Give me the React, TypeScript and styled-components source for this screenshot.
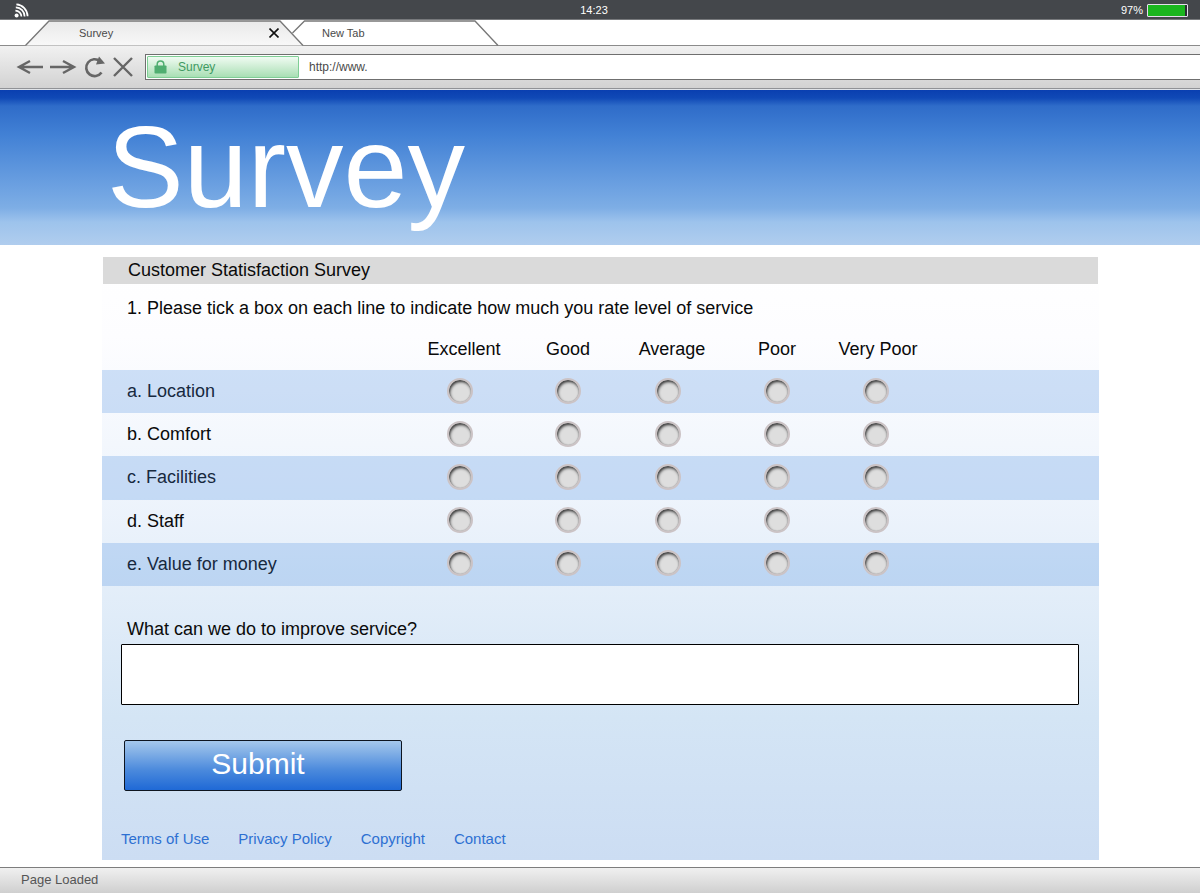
import React from 'react';
import styled, { createGlobalStyle } from 'styled-components';

const GlobalStyle = createGlobalStyle`
  *, *::before, *::after { box-sizing: border-box; }
  body {
    margin: 0;
    background: #fff;
    color: #0a0a0a;
    font-family: "Liberation Sans", Arial, sans-serif;
  }
  button, input, textarea { font-family: inherit; }
`;

const Page = styled.div`
  display: flex;
  flex-direction: column;
  min-height: 100vh;
`;

/* Device status bar */
const DeviceBar = styled.div`
  display: grid;
  grid-template-columns: 1fr auto 1fr;
  align-items: center;
  height: 20px;
  padding: 0 12px 0 0;
  background: #44474b;
  border-bottom: 1px solid #77797c;
  color: #fff;
  font-size: 11px;
  line-height: 20px;
`;

const Signal = styled.span`
  display: flex;
  padding-left: 14px;
`;

const Charge = styled.div`
  display: flex;
  justify-content: flex-end;
  align-items: center;
  gap: 4px;
`;

const Battery = styled.span`
  width: 41px;
  height: 13px;
  padding-right: 1px;
  border: 1px solid #e6dcec;
  border-radius: 1px;
  background: #2b2d33;
`;

const BatteryLevel = styled.span`
  display: block;
  height: 100%;
  background: #1bb51f;
`;

/* Browser chrome */
const TabStrip = styled.div`
  display: flex;
  height: 26px;
  padding-left: 24px;
  border-bottom: 1px solid #8b8b8b;
`;

const Tab = styled.div<{ $width: number; $inset: number; $overlap?: boolean }>`
  position: relative;
  display: flex;
  align-items: center;
  justify-content: space-between;
  flex: none;
  width: ${(p) => p.$width}px;
  margin-left: ${(p) => (p.$overlap ? -12 : 0)}px;
  padding: 0 25px 0 ${(p) => p.$inset}px;
`;

const TabShape = styled.svg`
  position: absolute;
  top: 0;
  left: 0;
`;

const TabLabel = styled.button`
  position: relative;
  padding: 0;
  border: 0;
  background: none;
  color: #4a4a4a;
  font-size: 11px;
  line-height: 24px;
`;

const TabClose = styled.button`
  position: relative;
  display: flex;
  padding: 0;
  border: 0;
  background: none;
`;

const Toolbar = styled.div`
  display: flex;
  align-items: center;
  height: 43px;
  padding: 0 0 1px 16px;
  background: linear-gradient(#f1f1f1, #d2d2d2);
  border-bottom: 1px solid #909296;
`;

const NavButtons = styled.div`
  display: flex;
  align-items: center;
  gap: 7px;
  margin-right: 12px;
`;

const NavButton = styled.button`
  display: flex;
  padding: 0;
  border: 0;
  background: none;
`;

const AddressBar = styled.div`
  display: flex;
  align-items: center;
  flex: 1;
  height: 26px;
  padding-left: 1px;
  border: 1px solid #6f6f6f;
  border-right: 0;
  background: #fff;
`;

const SiteBadge = styled.span`
  display: flex;
  align-items: center;
  gap: 11px;
  width: 152px;
  height: 22px;
  padding-left: 6px;
  border: 1px solid #7fce95;
  border-radius: 1px;
  background: linear-gradient(#f0fbf2, #a9dfb4);
  color: #3f9a62;
  font-size: 12px;
`;

const Address = styled.input`
  flex: 1;
  min-width: 0;
  padding: 0 0 0 10px;
  border: 0;
  background: none;
  color: #4a4a4a;
  font-size: 12px;
  outline: 0;
`;

/* Page content */
const Banner = styled.header`
  height: 156px;
  padding: 11px 111px;
  border-top: 1px solid #dfe3e8;
  background: linear-gradient(
    #0a3fb0 0,
    #1049b6 8px,
    #2f6cc9 16px,
    #4281d5 45px,
    #6fa3e2 100px,
    #7eaee5 118px,
    #9dc3ec 132px,
    #b0cdee 155px
  );
`;

const Title = styled.h1`
  margin: 0 0 0 -4px;
  color: #fff;
  font-size: 115px;
  font-weight: 400;
  line-height: 132px;
`;

const Panel = styled.form`
  flex: 1;
  margin: 12px 101px 7px 102px;
  background: linear-gradient(#fff 0, #fdfdff 80px, #eef4fc 240px, #d4e5f5 460px, #ccddf3 100%);
`;

const PanelTitle = styled.h2`
  margin: 0 1px;
  padding-left: 25px;
  background: #dadada;
  font-size: 18px;
  font-weight: 400;
  line-height: 27px;
`;

const Question = styled.p`
  margin: 0;
  padding: 12px 25px 9px;
  font-size: 18px;
  line-height: 24px;
`;

const Ratings = styled.table`
  width: 100%;
  height: 257px;
  table-layout: fixed;
  border-collapse: collapse;
  font-size: 18px;
`;

const LabelColumn = styled.col`
  width: 310px;
`;

const RatingColumn = styled.col<{ $width: number }>`
  width: ${(p) => p.$width}px;
`;

const HeadRow = styled.tr`
  height: 41px;
`;

const HeadCell = styled.th`
  padding: 0;
  font-weight: 400;
  white-space: nowrap;
`;

const RatingRow = styled.tr<{ $shaded: boolean }>`
  color: ${(p) => (p.$shaded ? '#17293f' : '#0a0a0a')};
  background: ${(p) => (p.$shaded ? 'rgba(70, 140, 225, 0.25)' : 'transparent')};
`;

const RowLabel = styled.th`
  padding: 0 0 0 25px;
  font-weight: 400;
  text-align: left;
`;

const RatingCell = styled.td<{ $trim: number }>`
  padding: 0 ${(p) => p.$trim}px 2px 0;
  text-align: center;
`;

const Radio = styled.input`
  appearance: none;
  display: inline-block;
  width: 26px;
  height: 26px;
  margin: 0;
  border: 2px solid #cbc3c5;
  border-radius: 50%;
  background: #dedede;
  box-shadow: inset 0 0 1px #777, inset 1px 2px 3px #333;
  vertical-align: middle;

  &:checked {
    background: radial-gradient(#2f6cc9 0 5px, #dedede 6px);
  }
`;

const Comments = styled.div`
  display: flex;
  flex-direction: column;
  padding: 31px 20px 0 19px;
`;

const CommentsLabel = styled.label`
  padding: 0 6px 3px;
  font-size: 18px;
  line-height: 24px;
`;

const CommentsBox = styled.textarea`
  height: 61px;
  padding: 6px;
  border: 1px solid #000;
  border-radius: 1px;
  background: #fff;
  font-size: 18px;
  resize: none;
`;

const Submit = styled.button`
  display: block;
  width: 278px;
  height: 51px;
  margin: 35px 0 0 22px;
  padding: 0 10px 3px 0;
  border: 1px solid #0d1520;
  border-radius: 2px;
  background: linear-gradient(#a5c8ec, #4a89dc 60%, #1f69d6);
  color: #fff;
  font-size: 30px;
`;

const Links = styled.nav`
  display: flex;
  flex-wrap: wrap;
  gap: 29px;
  padding: 37px 19px 11px;
  line-height: 21px;
`;

const FooterLink = styled.a`
  color: #2d70d2;
  font-size: 15px;
  text-decoration: none;
`;

const StatusBar = styled.footer`
  height: 26px;
  padding-left: 21px;
  border-top: 1px solid #7d7d7d;
  background: linear-gradient(#f0f0f0, #cfcfcf);
  color: #555;
  font-size: 13px;
  line-height: 24px;
`;

const columns = [
  { name: 'Excellent', width: 104, trim: 8 },
  { name: 'Good', width: 104, trim: 0 },
  { name: 'Average', width: 104, trim: 8 },
  { name: 'Poor', width: 106, trim: 0 },
  { name: 'Very Poor', width: 96, trim: 4 },
];

const rows = ['a. Location', 'b. Comfort', 'c. Facilities', 'd. Staff', 'e. Value for money'];

const links = ['Terms of Use', 'Privacy Policy', 'Copyright', 'Contact'];

const SignalIcon = () => (
  <svg width="15" height="15" viewBox="0 0 15 15" fill="none" stroke="#fff" strokeWidth="1.7">
    <circle cx="2.6" cy="12.4" r="2" fill="#fff" stroke="none" />
    <path d="M1.4 7.6a6 6 0 0 1 6 6M1.8 4.4a9 9 0 0 1 8.8 9.2M2.4 1.4a12 12 0 0 1 11.2 11.8" />
  </svg>
);

const BackIcon = () => (
  <svg width="27" height="18" viewBox="0 0 27 18" fill="none" stroke="#666" strokeWidth="2.4">
    <path d="M3 9h24M14 3L3 9l11 6" />
  </svg>
);

const ForwardIcon = () => (
  <svg width="27" height="18" viewBox="0 0 27 18" fill="none" stroke="#666" strokeWidth="2.4">
    <path d="M0 9h24M13 3l11 6-11 6" />
  </svg>
);

const ReloadIcon = () => (
  <svg width="22" height="22" viewBox="0 0 22 22" fill="none" stroke="#666" strokeWidth="2.6">
    <path d="M16 5.200A8.400 8.400 0 1 0 17.500 16.500" />
    <path d="M15 0.500L21 7.500L12 8.500Z" fill="#666" stroke="none" />
  </svg>
);

const StopIcon = () => (
  <svg width="20" height="20" viewBox="0 0 20 20" fill="none" stroke="#666" strokeWidth="2.4">
    <path d="M1 1l18 18M19 1L1 19" />
  </svg>
);

const LockIcon = () => (
  <svg width="13" height="14" viewBox="0 0 13 14">
    <rect x="0.5" y="5.5" width="12" height="8" rx="0.8" fill="#4fae70" />
    <path d="M3.200 6.500V4.200a3.300 3.300 0 0 1 6.600 0v2.300" fill="none" stroke="#4fae70" strokeWidth="1.5" />
  </svg>
);

const CloseIcon = () => (
  <svg width="10" height="10" viewBox="0 0 10 10" stroke="#111" strokeWidth="1.6">
    <path d="M.5.5l9 9M9.500.5l-9 9" />
  </svg>
);

export default function App() {
  return (
    <Page>
      <GlobalStyle />
      <DeviceBar>
        <Signal>
          <SignalIcon />
        </Signal>
        <span>14:23</span>
        <Charge>
          <span>97%</span>
          <Battery>
            <BatteryLevel style={{ width: '97%' }} />
          </Battery>
        </Charge>
      </DeviceBar>

      <TabStrip>
        <Tab $width={280} $inset={55}>
          <TabShape width="280" height="26" viewBox="0 0 280 26">
            <defs>
              <linearGradient id="activeTab" x1="0" y1="0" x2="0" y2="1">
                <stop offset="0" stopColor="#e9e9e9" />
                <stop offset="1" stopColor="#f8f8f8" />
              </linearGradient>
            </defs>
            <path d="M1.500 25.500L25 1h231l23 24.500" fill="url(#activeTab)" stroke="#777" strokeWidth="1.3" />
          </TabShape>
          <TabLabel type="button">Survey</TabLabel>
          <TabClose type="button" aria-label="Close tab">
            <CloseIcon />
          </TabClose>
        </Tab>
        <Tab $width={208} $inset={30} $overlap>
          <TabShape width="208" height="26" viewBox="0 0 208 26">
            <path d="M.5 13L12.500 1H183l23 24.500" fill="none" stroke="#777" strokeWidth="1.3" />
          </TabShape>
          <TabLabel type="button">New Tab</TabLabel>
        </Tab>
      </TabStrip>

      <Toolbar>
        <NavButtons>
          <NavButton type="button" aria-label="Back"><BackIcon /></NavButton>
          <NavButton type="button" aria-label="Forward"><ForwardIcon /></NavButton>
          <NavButton type="button" aria-label="Reload"><ReloadIcon /></NavButton>
          <NavButton type="button" aria-label="Stop"><StopIcon /></NavButton>
        </NavButtons>
        <AddressBar>
          <SiteBadge>
            <LockIcon />
            Survey
          </SiteBadge>
          <Address type="text" aria-label="Address" defaultValue="http://www." />
        </AddressBar>
      </Toolbar>

      <Banner>
        <Title>Survey</Title>
      </Banner>

      <Panel onSubmit={(e) => e.preventDefault()}>
        <PanelTitle>Customer Statisfaction Survey</PanelTitle>
        <Question>1. Please tick a box on each line to indicate how much you rate level of service</Question>
        <Ratings>
          <colgroup>
            <LabelColumn />
            {columns.map((c) => (
              <RatingColumn key={c.name} $width={c.width} />
            ))}
            <col />
          </colgroup>
          <thead>
            <HeadRow>
              <td />
              {columns.map((c) => (
                <HeadCell key={c.name} scope="col">{c.name}</HeadCell>
              ))}
              <td />
            </HeadRow>
          </thead>
          <tbody>
            {rows.map((row, i) => (
              <RatingRow key={row} $shaded={i % 2 === 0}>
                <RowLabel scope="row">{row}</RowLabel>
                {columns.map((c) => (
                  <RatingCell key={c.name} $trim={c.trim}>
                    <Radio type="radio" name={`rating-${i}`} value={c.name} aria-label={`${row}: ${c.name}`} />
                  </RatingCell>
                ))}
                <td />
              </RatingRow>
            ))}
          </tbody>
        </Ratings>
        <Comments>
          <CommentsLabel htmlFor="comments">What can we do to improve service?</CommentsLabel>
          <CommentsBox id="comments" />
        </Comments>
        <Submit type="submit">Submit</Submit>
        <Links>
          {links.map((name) => (
            <FooterLink key={name} href="#">{name}</FooterLink>
          ))}
        </Links>
      </Panel>

      <StatusBar>Page Loaded</StatusBar>
    </Page>
  );
}
